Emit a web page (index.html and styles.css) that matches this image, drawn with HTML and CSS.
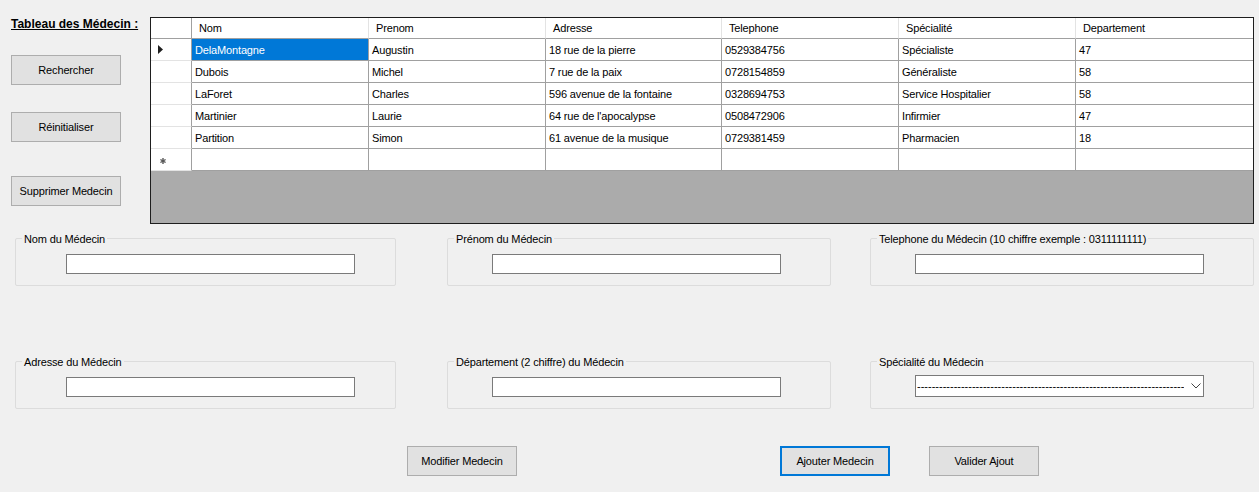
FILE: index.html
```html
<!DOCTYPE html>
<html lang="fr">
<head>
<meta charset="utf-8">
<title>Tableau des Médecin</title>
<link rel="stylesheet" href="styles.css">
</head>
<body>
<div class="top">
  <div class="side">
    <div class="title">Tableau des Médecin :</div>
    <button class="btn btn-search">Rechercher</button>
    <button class="btn btn-reset">Réinitialiser</button>
    <button class="btn btn-delete">Supprimer Medecin</button>
  </div>
  <div class="dgv">
    <div class="dgv-grid">
      <div class="cell corner"></div>
      <div class="cell head">Nom</div>
      <div class="cell head">Prenom</div>
      <div class="cell head">Adresse</div>
      <div class="cell head">Telephone</div>
      <div class="cell head">Spécialité</div>
      <div class="cell head last">Departement</div>

      <div class="cell rowhead"><svg class="arrow" width="5" height="9" viewBox="0 0 5 9"><polygon points="0,0 5,4.5 0,9" fill="#1e1e1e"/></svg></div>
      <div class="cell selected">DelaMontagne</div>
      <div class="cell">Augustin</div>
      <div class="cell">18 rue de la pierre</div>
      <div class="cell">0529384756</div>
      <div class="cell">Spécialiste</div>
      <div class="cell last">47</div>

      <div class="cell rowhead"></div>
      <div class="cell">Dubois</div>
      <div class="cell">Michel</div>
      <div class="cell">7 rue de la paix</div>
      <div class="cell">0728154859</div>
      <div class="cell">Généraliste</div>
      <div class="cell last">58</div>

      <div class="cell rowhead"></div>
      <div class="cell">LaForet</div>
      <div class="cell">Charles</div>
      <div class="cell">596 avenue de la fontaine</div>
      <div class="cell">0328694753</div>
      <div class="cell">Service Hospitalier</div>
      <div class="cell last">58</div>

      <div class="cell rowhead"></div>
      <div class="cell">Martinier</div>
      <div class="cell">Laurie</div>
      <div class="cell">64 rue de l'apocalypse</div>
      <div class="cell">0508472906</div>
      <div class="cell">Infirmier</div>
      <div class="cell last">47</div>

      <div class="cell rowhead"></div>
      <div class="cell">Partition</div>
      <div class="cell">Simon</div>
      <div class="cell">61 avenue de la musique</div>
      <div class="cell">0729381459</div>
      <div class="cell">Pharmacien</div>
      <div class="cell last">18</div>

      <div class="cell rowhead"><svg class="star" width="6" height="6" viewBox="0 0 6 6"><g stroke="#555" stroke-width="1.4"><line x1="3" y1="0" x2="3" y2="6"/><line x1="0.4" y1="1.5" x2="5.6" y2="4.5"/><line x1="0.4" y1="4.5" x2="5.6" y2="1.5"/></g></svg></div>
      <div class="cell"></div>
      <div class="cell"></div>
      <div class="cell"></div>
      <div class="cell"></div>
      <div class="cell"></div>
      <div class="cell last"></div>
    </div>
  </div>
</div>

<div class="groups groups-1">
  <div class="group g1">
    <span class="legend">Nom du Médecin</span>
    <input class="field" type="text">
  </div>
  <div class="group g2">
    <span class="legend">Prénom du Médecin</span>
    <input class="field" type="text">
  </div>
  <div class="group g3">
    <span class="legend">Telephone du Médecin (10 chiffre exemple : 0311111111)</span>
    <input class="field" type="text">
  </div>
</div>

<div class="groups groups-2">
  <div class="group g1">
    <span class="legend">Adresse du Médecin</span>
    <input class="field" type="text">
  </div>
  <div class="group g2">
    <span class="legend">Département (2 chiffre) du Médecin</span>
    <input class="field" type="text">
  </div>
  <div class="group g3">
    <span class="legend">Spécialité du Médecin</span>
    <div class="combo">
      <span class="combo-text">-------------------------------------------------------------------------</span>
      <svg class="chev" width="10" height="6" viewBox="0 0 10 6"><polyline points="0.5,0.5 5,5 9.5,0.5" fill="none" stroke="#444" stroke-width="1"/></svg>
    </div>
  </div>
</div>

<div class="actions">
  <button class="btn btn-modify">Modifier Medecin</button>
  <button class="btn btn-add">Ajouter Medecin</button>
  <button class="btn btn-validate">Valider Ajout</button>
</div>
</body>
</html>
```
FILE: styles.css
```css
html, body {
  margin: 0;
  padding: 0;
}
body {
  width: 1259px;
  height: 492px;
  overflow: hidden;
  background: #f0f0f0;
  font-family: "Liberation Sans", Arial, sans-serif;
  font-size: 11px;
  letter-spacing: -0.15px;
  color: #000;
}

.top {
  display: flex;
  padding-top: 17px;
}
.side {
  width: 150px;
  box-sizing: border-box;
  padding-left: 11px;
  display: flex;
  flex-direction: column;
  align-items: flex-start;
}
.title {
  font-weight: bold;
  font-size: 12px;
  letter-spacing: 0;
  line-height: 14px;
  text-decoration: underline;
}

.btn {
  width: 110px;
  height: 30px;
  box-sizing: border-box;
  margin: 0;
  padding: 0;
  background: #e1e1e1;
  border: 1px solid #adadad;
  border-radius: 0;
  font-family: "Liberation Sans", Arial, sans-serif;
  font-size: 11px;
  letter-spacing: -0.15px;
  color: #000;
}
.btn-search { margin-top: 24px; }
.btn-reset { margin-top: 27px; }
.btn-delete { margin-top: 34px; }

.dgv {
  width: 1104px;
  height: 207px;
  box-sizing: border-box;
  border: 1px solid #1e1e1e;
  background: #ababab;
}
.dgv-grid {
  display: grid;
  grid-template-columns: 41px 177px 177px 176px 177px 177px 1fr;
  grid-template-rows: 21px repeat(6, 22px);
}
.cell {
  box-sizing: border-box;
  background: #fff;
  border-right: 1px solid #a0a0a0;
  border-bottom: 1px solid #a0a0a0;
  padding-left: 3px;
  padding-top: 1px;
  line-height: 20px;
  white-space: nowrap;
  overflow: hidden;
}
.cell.last { border-right: none; }
.cell.head {
  padding-left: 7px;
  padding-top: 0;
  line-height: 20px;
  border-right-color: #e3e3e3;
}
.cell.corner {
  border-right-color: #a0a0a0;
}
.cell.rowhead {
  border-bottom-color: #e3e3e3;
  padding-left: 7px;
  padding-top: 0;
  display: flex;
  align-items: center;
}
.cell.selected {
  background: #0078d7;
  color: #fff;
}
.arrow { display: block; }
.star { display: block; margin-left: 2px; margin-top: 2px; }

.groups {
  display: flex;
  padding-left: 15px;
}
.groups-1 { margin-top: 14px; }
.groups-2 { margin-top: 75px; }

.group {
  position: relative;
  box-sizing: border-box;
  height: 48px;
  border: 1px solid #dcdcdc;
  border-radius: 2px;
  padding-top: 15px;
}
.g1 { width: 381px; padding-left: 50px; }
.g2 { width: 384px; padding-left: 44px; margin-left: 51px; }
.g3 { width: 384px; padding-left: 44px; margin-left: 39px; }

.legend {
  position: absolute;
  left: 6px;
  top: -7px;
  padding: 0 2px;
  line-height: 14px;
  background: #f0f0f0;
  white-space: nowrap;
}

.field {
  display: block;
  width: 289px;
  height: 20px;
  box-sizing: border-box;
  margin: 0;
  padding: 0 2px;
  border: 1px solid #7a7a7a;
  background: #fff;
  font-family: "Liberation Sans", Arial, sans-serif;
  font-size: 11px;
  outline: none;
}

.combo {
  display: flex;
  align-items: center;
  width: 289px;
  height: 22px;
  margin-top: -2px;
  box-sizing: border-box;
  border: 1px solid #7a7a7a;
  background: #fff;
  padding-left: 1px;
}
.combo-text {
  width: 267px;
  overflow: hidden;
  white-space: nowrap;
  letter-spacing: 0;
  line-height: 20px;
}
.chev {
  display: block;
  margin-left: 7px;
}

.actions {
  display: flex;
  padding-left: 407px;
  margin-top: 37px;
}
.btn-add {
  margin-left: 263px;
  border: 2px solid #0078d7;
}
.btn-validate { margin-left: 39px; }
```
